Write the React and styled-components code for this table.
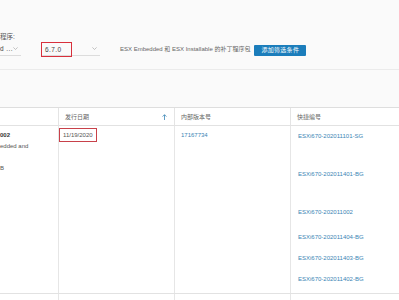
import styled, { createGlobalStyle } from 'styled-components';

const GlobalStyle = createGlobalStyle`
  body {
    margin: 0;
    background: #fafafa;
    font-family: "Liberation Sans", "Noto Sans CJK SC", sans-serif;
  }
`;

const Page = styled.div`
  width: 399px;
  height: 300px;
  overflow: hidden;
  background: #fafafa;
`;

const FilterBar = styled.div`
  height: 70px;
  box-sizing: border-box;
  padding-top: 33px;
  border-bottom: 1px solid #ebebeb;
`;

const FieldLabel = styled.div`
  font-size: 6.5px;
  line-height: 8px;
  color: #555;
`;

const FilterRow = styled.div`
  display: flex;
  align-items: flex-start;
  height: 16px;
  margin-top: 1px;
`;

const Select = styled.div`
  display: flex;
  align-items: center;
  justify-content: space-between;
  width: ${(p) => p.$w}px;
  height: 14px;
  margin-right: ${(p) => p.$gap}px;
  padding-right: 3px;
  box-sizing: border-box;
  border-bottom: 1px solid #dcdcdc;
  font-size: 6.5px;
  color: #444;
`;

const SelectValue = styled.span`
  box-sizing: border-box;
  height: ${(p) => (p.$marked ? '15px' : 'auto')};
  width: ${(p) => (p.$marked ? '31px' : 'auto')};
  padding-left: ${(p) => (p.$marked ? '3px' : '0')};
  border: ${(p) => (p.$marked ? '1px solid #d8303c' : 'none')};
  line-height: 13px;
  letter-spacing: 0.4px;
  align-self: ${(p) => (p.$marked ? 'flex-start' : 'center')};
`;

const Description = styled.span`
  font-size: 6px;
  line-height: 14px;
  color: #666;
  white-space: nowrap;
  margin-right: 4px;
`;

const Button = styled.button`
  height: 11px;
  margin-top: 3px;
  padding: 0 7px;
  border: none;
  border-radius: 1px;
  background: #1b7dbb;
  color: #fff;
  font-family: inherit;
  font-size: 6px;
  line-height: 11px;
  letter-spacing: 0.3px;
`;

const Table = styled.div`
  margin-top: 37px;
  background: #fff;
  border-top: 1px solid #dedede;
`;

const Row = styled.div`
  display: grid;
  grid-template-columns: 58px 116px 116px 1fr;
  height: ${(p) => p.$h}px;
  border-bottom: 1px solid #e2e2e2;
`;

const HeadCell = styled.div`
  display: flex;
  align-items: center;
  justify-content: space-between;
  padding: 0 7px 0 6px;
  border-left: ${(p) => (p.$first ? 'none' : '1px solid #e4e4e4')};
  font-size: 6px;
  color: #666;
`;

const Cell = styled.div`
  padding: ${(p) => p.$pt || 0}px 0 0 ${(p) => p.$pl || 0}px;
  border-left: ${(p) => (p.$first ? 'none' : '1px solid #e6e6e6')};
  font-size: 6px;
  line-height: 11px;
  color: #555;
`;

const Title = styled.div`
  font-weight: bold;
  color: #333;
`;

const Line = styled.div`
  height: 11px;
`;

const DateBox = styled.span`
  display: inline-block;
  height: 14px;
  padding: 0 3px;
  box-sizing: border-box;
  border: 1px solid #c8414a;
  line-height: 12px;
  color: #555;
`;

const Link = styled.a`
  display: block;
  height: ${(p) => p.$h || 11}px;
  color: #3a85b5;
  text-decoration: none;
`;

const SortArrow = () => (
  <svg width="5" height="6" viewBox="0 0 5 6">
    <path d="M2.5 6V0.8M0.6 2.6L2.5 0.7L4.4 2.6" stroke="#3a85b5" strokeWidth="0.8" fill="none" />
  </svg>
);

const Chevron = () => (
  <svg width="5" height="3" viewBox="0 0 5 3">
    <path d="M0.4 0.4L2.5 2.5L4.6 0.4" stroke="#aaa" strokeWidth="0.7" fill="none" />
  </svg>
);

const patches = [
  { id: 'ESXi670-202011101-SG', h: 38 },
  { id: 'ESXi670-202011401-BG', h: 38 },
  { id: 'ESXi670-202011002', h: 25 },
  { id: 'ESXi670-202011404-BG', h: 21 },
  { id: 'ESXi670-202011403-BG', h: 21 },
  { id: 'ESXi670-202011402-BG', h: 11 },
];

const App = () => (
  <Page>
    <GlobalStyle />
    <FilterBar>
      <FieldLabel>程序:</FieldLabel>
      <FilterRow>
        <Select $w={21} $gap={20}>
          <SelectValue>d ...</SelectValue>
          <Chevron />
        </Select>
        <Select $w={59} $gap={20}>
          <SelectValue $marked>6.7.0</SelectValue>
          <Chevron />
        </Select>
        <Description>ESX Embedded 和 ESX Installable 的补丁程序包</Description>
        <Button>添加筛选条件</Button>
      </FilterRow>
    </FilterBar>
    <Table>
      <Row $h={17}>
        <HeadCell $first />
        <HeadCell>
          <span>发行日期</span>
          <SortArrow />
        </HeadCell>
        <HeadCell>内部版本号</HeadCell>
        <HeadCell>快捷编号</HeadCell>
      </Row>
      <Row $h={167}>
        <Cell $first $pt={4}>
          <Title>002</Title>
          <Line>edded and</Line>
          <Line />
          <Line>B</Line>
        </Cell>
        <Cell $pt={2}>
          <DateBox>11/19/2020</DateBox>
        </Cell>
        <Cell $pt={4} $pl={6}>
          <Link href="#">17167734</Link>
        </Cell>
        <Cell $pt={5} $pl={7}>
          {patches.map((p) => (
            <Link key={p.id} href="#" $h={p.h}>
              {p.id}
            </Link>
          ))}
        </Cell>
      </Row>
      <Row $h={20}>
        <Cell $first />
        <Cell />
        <Cell />
        <Cell />
      </Row>
    </Table>
  </Page>
);

export default App;
